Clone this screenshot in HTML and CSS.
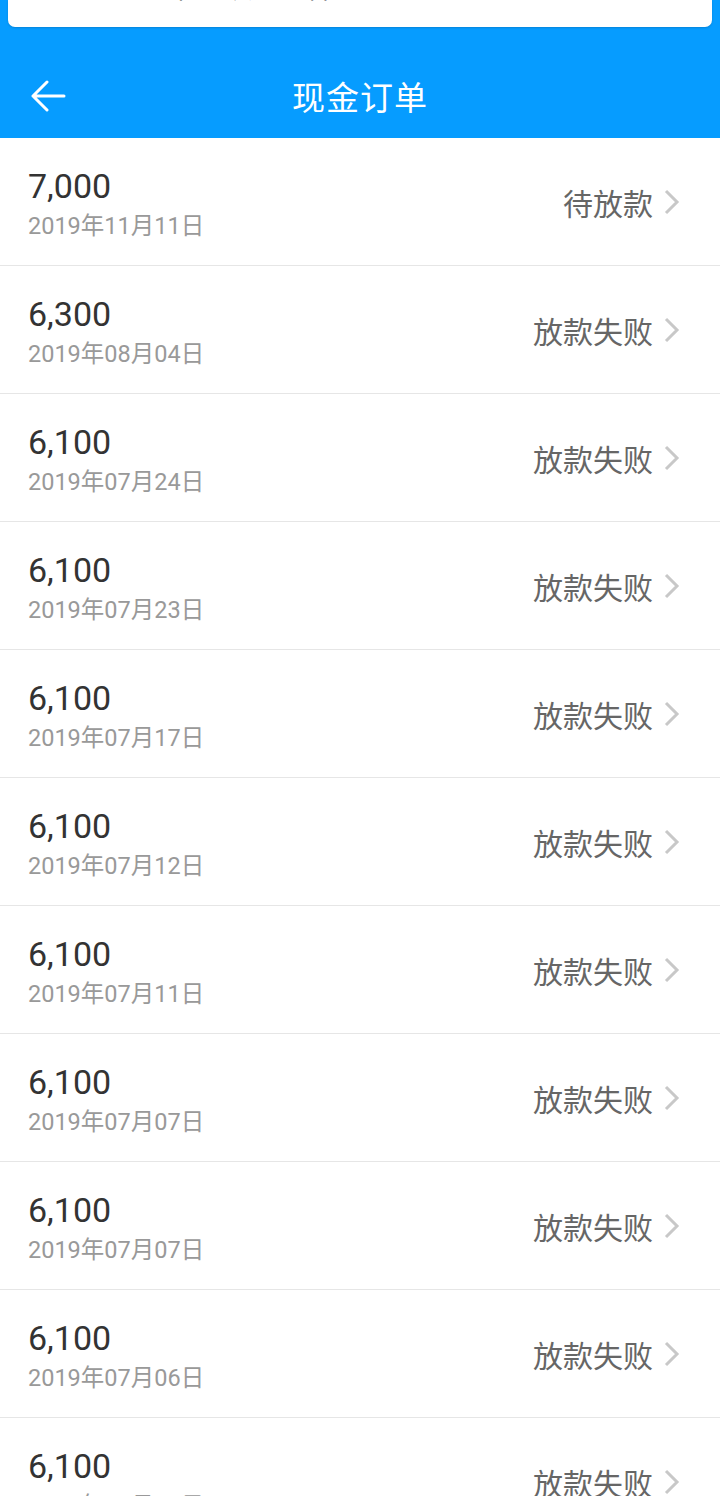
FILE: index.html
```html
<!DOCTYPE html>
<html lang="zh-CN">
<head>
    <meta charset="UTF-8">
    <meta name="viewport" content="width=device-width, initial-scale=1.0">
    <title>现金订单</title>
    <link rel="stylesheet" href="styles.css">
</head>
<body>

    <!-- Top bar with the notification card sliding out of view -->
    <div class="header">
        <div class="notice">
            <span class="notice-text">您有一笔订单 请及时查看</span>
        </div>
        <div class="titlebar">
            <button class="back" aria-label="返回">
                <svg width="36" height="32" viewBox="0 0 36 32">
                    <path d="M17 2 L3 16 L17 30 M3 16 L34 16" fill="none" stroke="#fff" stroke-width="3" stroke-linecap="round" stroke-linejoin="round"/>
                </svg>
            </button>
            <h1>现金订单</h1>
        </div>
    </div>

    <!-- Order list -->
    <ul class="orders">
        <li class="order">
            <div class="info">
                <div class="amount">7,000</div>
                <div class="date">2019年11月11日</div>
            </div>
            <div class="status">待放款<svg class="chevron" width="16" height="26" viewBox="0 0 16 26"><path d="M2 2 L13 13 L2 24" fill="none" stroke="#c8c8c8" stroke-width="3"/></svg></div>
        </li>
        <li class="order">
            <div class="info">
                <div class="amount">6,300</div>
                <div class="date">2019年08月04日</div>
            </div>
            <div class="status">放款失败<svg class="chevron" width="16" height="26" viewBox="0 0 16 26"><path d="M2 2 L13 13 L2 24" fill="none" stroke="#c8c8c8" stroke-width="3"/></svg></div>
        </li>
        <li class="order">
            <div class="info">
                <div class="amount">6,100</div>
                <div class="date">2019年07月24日</div>
            </div>
            <div class="status">放款失败<svg class="chevron" width="16" height="26" viewBox="0 0 16 26"><path d="M2 2 L13 13 L2 24" fill="none" stroke="#c8c8c8" stroke-width="3"/></svg></div>
        </li>
        <li class="order">
            <div class="info">
                <div class="amount">6,100</div>
                <div class="date">2019年07月23日</div>
            </div>
            <div class="status">放款失败<svg class="chevron" width="16" height="26" viewBox="0 0 16 26"><path d="M2 2 L13 13 L2 24" fill="none" stroke="#c8c8c8" stroke-width="3"/></svg></div>
        </li>
        <li class="order">
            <div class="info">
                <div class="amount">6,100</div>
                <div class="date">2019年07月17日</div>
            </div>
            <div class="status">放款失败<svg class="chevron" width="16" height="26" viewBox="0 0 16 26"><path d="M2 2 L13 13 L2 24" fill="none" stroke="#c8c8c8" stroke-width="3"/></svg></div>
        </li>
        <li class="order">
            <div class="info">
                <div class="amount">6,100</div>
                <div class="date">2019年07月12日</div>
            </div>
            <div class="status">放款失败<svg class="chevron" width="16" height="26" viewBox="0 0 16 26"><path d="M2 2 L13 13 L2 24" fill="none" stroke="#c8c8c8" stroke-width="3"/></svg></div>
        </li>
        <li class="order">
            <div class="info">
                <div class="amount">6,100</div>
                <div class="date">2019年07月11日</div>
            </div>
            <div class="status">放款失败<svg class="chevron" width="16" height="26" viewBox="0 0 16 26"><path d="M2 2 L13 13 L2 24" fill="none" stroke="#c8c8c8" stroke-width="3"/></svg></div>
        </li>
        <li class="order">
            <div class="info">
                <div class="amount">6,100</div>
                <div class="date">2019年07月07日</div>
            </div>
            <div class="status">放款失败<svg class="chevron" width="16" height="26" viewBox="0 0 16 26"><path d="M2 2 L13 13 L2 24" fill="none" stroke="#c8c8c8" stroke-width="3"/></svg></div>
        </li>
        <li class="order">
            <div class="info">
                <div class="amount">6,100</div>
                <div class="date">2019年07月07日</div>
            </div>
            <div class="status">放款失败<svg class="chevron" width="16" height="26" viewBox="0 0 16 26"><path d="M2 2 L13 13 L2 24" fill="none" stroke="#c8c8c8" stroke-width="3"/></svg></div>
        </li>
        <li class="order">
            <div class="info">
                <div class="amount">6,100</div>
                <div class="date">2019年07月06日</div>
            </div>
            <div class="status">放款失败<svg class="chevron" width="16" height="26" viewBox="0 0 16 26"><path d="M2 2 L13 13 L2 24" fill="none" stroke="#c8c8c8" stroke-width="3"/></svg></div>
        </li>
        <li class="order">
            <div class="info">
                <div class="amount">6,100</div>
                <div class="date">2019年07月05日</div>
            </div>
            <div class="status">放款失败<svg class="chevron" width="16" height="26" viewBox="0 0 16 26"><path d="M2 2 L13 13 L2 24" fill="none" stroke="#c8c8c8" stroke-width="3"/></svg></div>
        </li>
    </ul>

</body>
</html>
```

FILE: styles.css
```css
html, body {
    margin: 0;
    padding: 0;
    background: #fff;
    font-family: Roboto, "Noto Sans CJK SC", sans-serif;
    overflow: hidden;
}
.header {
    background-color: #069cff;
    height: 138px;
}
.notice {
    margin: 0 8px;
    height: 27px;
    background: #fff;
    border-radius: 0 0 7px 7px;
    box-shadow: 0 1px 2px rgba(0, 0, 0, 0.15);
    overflow: hidden;
}
.notice-text {
    display: block;
    margin-top: -25px;
    padding-left: 30px;
    font-size: 26px;
    line-height: 28px;
    color: #333;
}
.titlebar {
    position: relative;
    height: 111px;
    display: flex;
    align-items: center;
    justify-content: center;
}
.titlebar h1 {
    margin: 0;
    font-size: 33px;
    font-weight: normal;
    color: #fff;
    letter-spacing: 1px;
    padding-top: 27px;
}
.back {
    position: absolute;
    left: 30px;
    top: 53px;
    padding: 0;
    border: none;
    background: none;
    width: 36px;
    height: 32px;
}
.back svg {
    display: block;
}
.orders {
    list-style: none;
    margin: 0;
    padding: 0;
}
.order {
    height: 127px;
    border-bottom: 1px solid #e6e6e6;
    display: flex;
    align-items: center;
    justify-content: space-between;
    padding: 0 40px 0 28px;
}
.info {
    padding-top: 3px;
}
.amount {
    font-size: 34px;
    line-height: 40px;
    color: #333;
}
.date {
    margin-top: 6px;
    font-size: 23.5px;
    line-height: 28px;
    color: #999;
}
.status {
    display: flex;
    align-items: center;
    font-size: 30px;
    color: #666;
}
.chevron {
    display: block;
    margin-left: 11px;
}
```
